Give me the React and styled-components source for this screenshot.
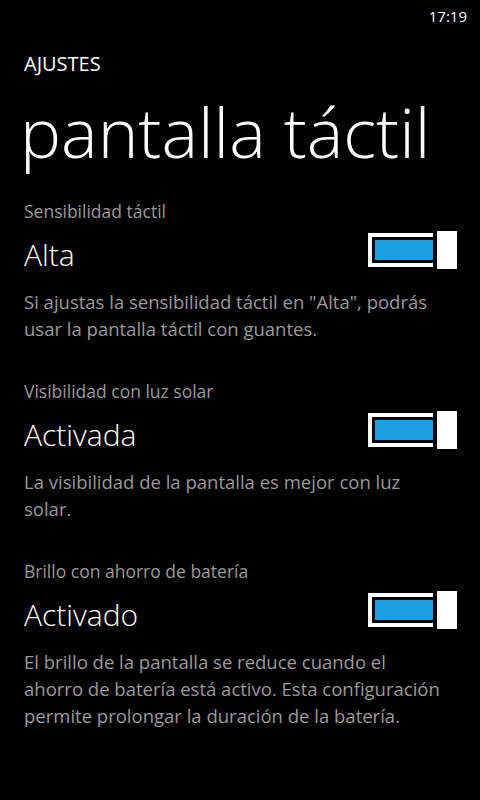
import { createGlobalStyle, styled } from "styled-components";

const GlobalStyle = createGlobalStyle`
  html, body {
    margin: 0;
    padding: 0;
    background: #000;
  }
`;

const Page = styled.div`
  width: 480px;
  min-height: 800px;
  background: #000;
  color: #fff;
  font-family: "Open Sans", "Noto Sans", sans-serif;
  overflow: hidden;
`;

const StatusBar = styled.div`
  height: 32px;
  display: flex;
  justify-content: flex-end;
  padding-right: 13px;
  font-size: 15px;
  line-height: 32px;
`;

const Header = styled.header`
  padding: 0 24px;
`;

const AppTitle = styled.div`
  margin-top: 20px;
  font-size: 20px;
  line-height: 24px;
`;

const PageTitle = styled.h1`
  margin: 15px 0 0 -4px;
  font-size: 69px;
  line-height: 80px;
  font-weight: 300;
  white-space: nowrap;
`;

const Settings = styled.div`
  margin-top: 27px;
  display: flex;
  flex-direction: column;
  gap: 36px;
`;

const Section = styled.section`
  padding: 0 23px 0 24px;
`;

const SectionLabel = styled.div`
  font-size: 17.5px;
  line-height: 26px;
  color: #999;
`;

const Row = styled.div`
  margin-top: 7px;
  display: flex;
  justify-content: space-between;
  align-items: flex-start;
`;

const Value = styled.div`
  margin-top: 5px;
  font-size: 30px;
  line-height: 38px;
  font-weight: 300;
`;

const Toggle = styled.div`
  display: flex;
  align-items: center;
  gap: 4px;
`;

const Track = styled.div`
  border: 4px solid #fff;
  border-right: none;
  padding: 3px 0 3px 3px;
`;

const Fill = styled.div`
  width: 58px;
  height: 20px;
  background: ${(p) => (p.$on ? "#1ba1e2" : "transparent")};
`;

const Thumb = styled.div`
  width: 20px;
  height: 38px;
  background: #fff;
`;

const Description = styled.p`
  margin: 14px 0 0;
  font-size: 18.5px;
  line-height: 27px;
  color: #999;
`;

const Line = styled.span`
  display: block;
  white-space: nowrap;
`;

const settings = [
  {
    label: "Sensibilidad táctil",
    value: "Alta",
    lines: [
      'Si ajustas la sensibilidad táctil en "Alta", podrás',
      "usar la pantalla táctil con guantes.",
    ],
  },
  {
    label: "Visibilidad con luz solar",
    value: "Activada",
    lines: ["La visibilidad de la pantalla es mejor con luz", "solar."],
  },
  {
    label: "Brillo con ahorro de batería",
    value: "Activado",
    lines: [
      "El brillo de la pantalla se reduce cuando el",
      "ahorro de batería está activo. Esta configuración",
      "permite prolongar la duración de la batería.",
    ],
  },
];

const App = () => {
  return (
    <Page>
      <GlobalStyle />
      <StatusBar>17:19</StatusBar>
      <Header>
        <AppTitle>AJUSTES</AppTitle>
        <PageTitle>pantalla táctil</PageTitle>
      </Header>
      <Settings>
        {settings.map((s) => (
          <Section key={s.label}>
            <SectionLabel>{s.label}</SectionLabel>
            <Row>
              <Value>{s.value}</Value>
              <Toggle>
                <Track>
                  <Fill $on />
                </Track>
                <Thumb />
              </Toggle>
            </Row>
            <Description>
              {s.lines.map((line, i) => (
                <Line key={i}>{line}</Line>
              ))}
            </Description>
          </Section>
        ))}
      </Settings>
    </Page>
  );
};

export default App;
